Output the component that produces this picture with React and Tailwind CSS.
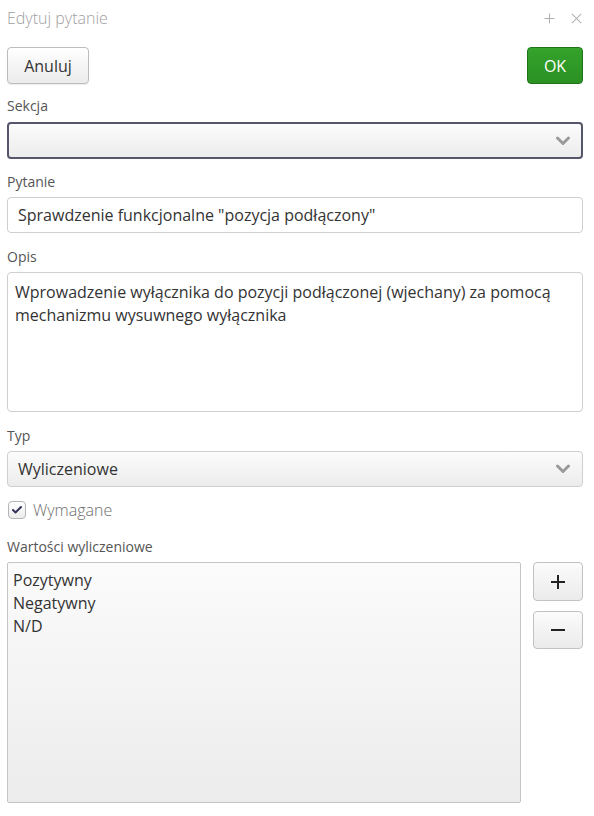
import { Check } from 'lucide-react';

function Chevron() {
  return (
    <svg width="16" height="10" viewBox="0 0 16 10" className="shrink-0">
      <polyline points="2.5,2 8,7.5 13.5,2" fill="none" stroke="#9a9a9a" strokeWidth="3" strokeLinecap="round" strokeLinejoin="round" />
    </svg>
  );
}

function Label({ children, className = '' }) {
  return <div className={`text-[14px] leading-[20px] text-[#555] ${className}`}>{children}</div>;
}

export default function App() {
  return (
    <div className="w-[594px] h-[816px] bg-white pl-[7px] pr-[11px] overflow-hidden" style={{ fontFamily: '"Open Sans", "Noto Sans", sans-serif' }}>
      {/* Title bar */}
      <div className="h-[36px] flex items-center justify-between">
        <span className="text-[16px] font-light text-[#a0a0a0]">Edytuj pytanie</span>
        <div className="flex items-center gap-[16px] pr-[1px] text-[#b0b0b0]">
          <svg width="11" height="11" viewBox="0 0 12 12"><path d="M6 0.5v11M0.5 6h11" stroke="#b0b0b0" strokeWidth="1.1" /></svg>
          <svg width="11" height="11" viewBox="0 0 12 12"><path d="M1 1l10 10M11 1L1 11" stroke="#b0b0b0" strokeWidth="1.1" /></svg>
        </div>
      </div>

      {/* Actions */}
      <div className="mt-[11px] flex justify-between">
        <button className="h-[37px] w-[82px] rounded-[4px] border border-[#bdbdbd] bg-gradient-to-b from-white to-[#ebebeb] text-[16px] text-[#333] shadow-[0_1px_1px_rgba(0,0,0,0.08)]">
          Anuluj
        </button>
        <button className="h-[37px] w-[56px] rounded-[4px] border border-[#1e7318] bg-gradient-to-b from-[#35a32c] to-[#2a9022] text-[16px] text-white">
          OK
        </button>
      </div>

      {/* Sekcja */}
      <Label className="mt-[12px]">Sekcja</Label>
      <div className="mt-[6px] h-[37px] rounded-[4px] border-2 border-[#56566a] bg-gradient-to-b from-[#fcfcfc] to-[#ececec] flex items-center justify-end pr-[10px]">
        <Chevron />
      </div>

      {/* Pytanie */}
      <Label className="mt-[13px]">Pytanie</Label>
      <div className="mt-[5px] h-[36px] rounded-[4px] border border-[#cfcfcf] bg-white flex items-center px-[10px] text-[16px] text-[#333]">
        Sprawdzenie funkcjonalne "pozycja podłączony"
      </div>

      {/* Opis */}
      <Label className="mt-[14px]">Opis</Label>
      <div className="mt-[5px] h-[140px] rounded-[4px] border border-[#cfcfcf] bg-white px-[7px] pt-[8px] text-[16px] leading-[23px] text-[#333]">
        Wprowadzenie wyłącznika do pozycji podłączonej (wjechany) za pomocą mechanizmu wysuwnego wyłącznika
      </div>

      {/* Typ */}
      <Label className="mt-[14px]">Typ</Label>
      <div className="mt-[5px] h-[36px] rounded-[4px] border border-[#cfcfcf] bg-gradient-to-b from-[#fcfcfc] to-[#ececec] flex items-center justify-between pl-[10px] pr-[11px] text-[16px] text-[#333]">
        <span>Wyliczeniowe</span>
        <Chevron />
      </div>

      {/* Wymagane */}
      <div className="mt-[12px] h-[22px] flex items-center gap-[7px] pl-[1px]">
        <div className="w-[18px] h-[18px] rounded-[4px] border border-[#b5b5b5] bg-gradient-to-b from-white to-[#ececec] flex items-center justify-center">
          <Check size={12} strokeWidth={4} color="#34345a" />
        </div>
        <span className="text-[16px] font-light text-[#6e6e6e]">Wymagane</span>
      </div>

      {/* Wartości */}
      <Label className="mt-[16px]">Wartości wyliczeniowe</Label>
      <div className="mt-[5px] flex justify-between">
        <div className="w-[514px] h-[241px] rounded-[2px] border border-[#c4c4c4] bg-gradient-to-b from-[#fbfbfb] to-[#ececec] px-[5px] pt-[6px] text-[16px] leading-[23px] text-[#333]">
          <div>Pozytywny</div>
          <div>Negatywny</div>
          <div>N/D</div>
        </div>
        <div className="flex flex-col gap-[10px]">
          <button className="w-[50px] h-[39px] rounded-[4px] border border-[#c2c2c2] bg-gradient-to-b from-[#fbfbfb] to-[#ebebeb] flex items-center justify-center">
            <svg width="16" height="16" viewBox="0 0 16 16"><path d="M8 1v14M1 8h14" stroke="#222" strokeWidth="2" /></svg>
          </button>
          <button className="w-[50px] h-[38px] rounded-[4px] border border-[#c2c2c2] bg-gradient-to-b from-[#fbfbfb] to-[#ebebeb] flex items-center justify-center">
            <svg width="16" height="16" viewBox="0 0 16 16"><path d="M1 8h14" stroke="#222" strokeWidth="2" /></svg>
          </button>
        </div>
      </div>
    </div>
  );
}
